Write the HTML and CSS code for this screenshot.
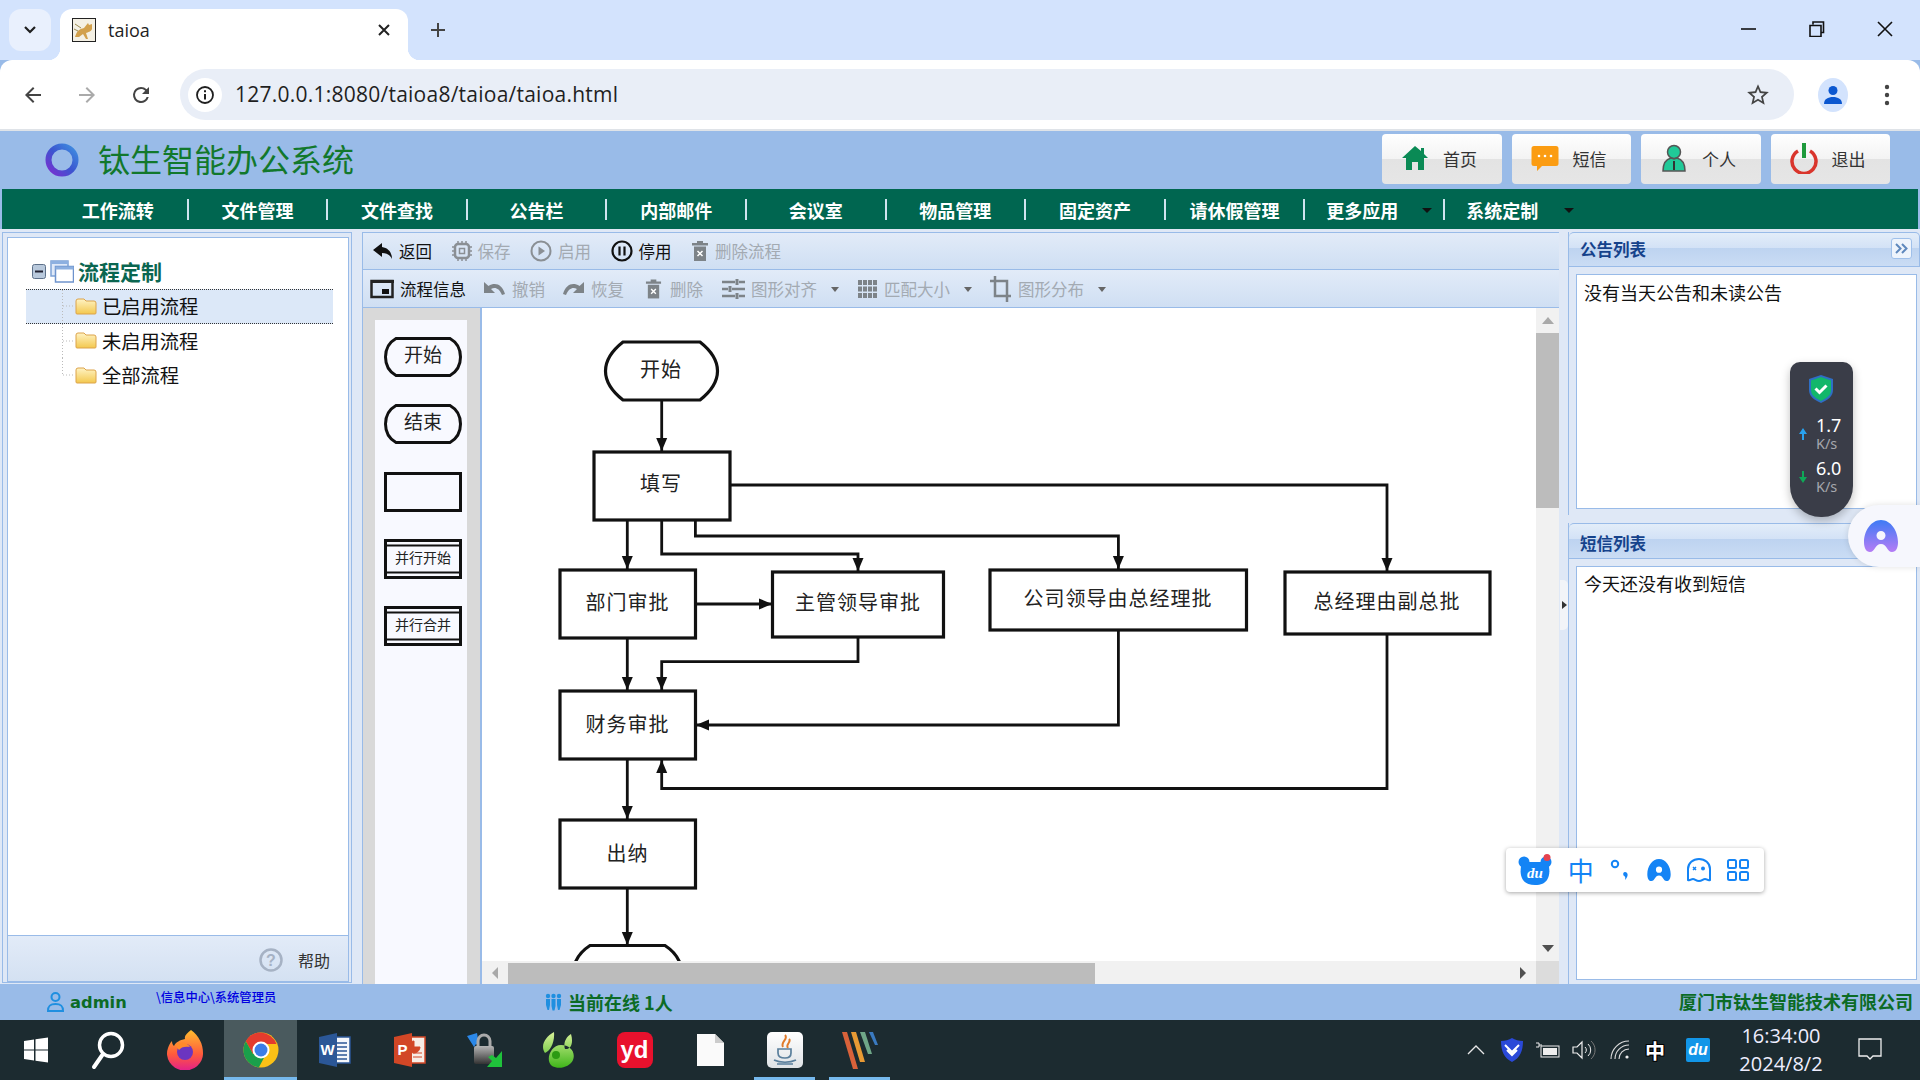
FILE: index.html
```html
<!DOCTYPE html>
<html lang="zh">
<head>
<meta charset="utf-8">
<title>taioa</title>
<link rel="stylesheet" href="styles.css">
</head>
<body>
<svg class="defs" width="0" height="0">
  <defs>
    <marker id="ah" markerUnits="userSpaceOnUse" markerWidth="14" markerHeight="12" refX="13" refY="6" orient="auto"><path d="M0 0.5 L13 6 L0 11.5Z" fill="#111"/></marker>
    <linearGradient id="ring" x1="1" y1="0" x2="0" y2="1"><stop offset="0" stop-color="#3f8fe0"/><stop offset=".5" stop-color="#3b55d0"/><stop offset="1" stop-color="#7a2fd0"/></linearGradient>
    <linearGradient id="folder" x1="0" y1="0" x2="0" y2="1"><stop offset="0" stop-color="#fff3c4"/><stop offset="1" stop-color="#f3c84e"/></linearGradient>
    <linearGradient id="ablue" x1="0" y1="0" x2="0" y2="1"><stop offset="0" stop-color="#3d7bf5"/><stop offset="1" stop-color="#b57cf5"/></linearGradient>
    <linearGradient id="fox" x1="0" y1="0" x2="0" y2="1"><stop offset="0" stop-color="#ffbd2e"/><stop offset=".6" stop-color="#ff5a3c"/><stop offset="1" stop-color="#e3208a"/></linearGradient>
    <linearGradient id="lockg" x1="0" y1="0" x2="0" y2="1"><stop offset="0" stop-color="#b5b5b5"/><stop offset="1" stop-color="#333"/></linearGradient>
    <linearGradient id="leaf" x1="0" y1="0" x2="0" y2="1"><stop offset="0" stop-color="#d9f29a"/><stop offset="1" stop-color="#3fb51a"/></linearGradient>
  </defs>
</svg>

<header class="tabstrip">
  <div class="tablist-btn"><svg width="14" height="10" viewBox="0 0 14 10"><path d="M2 2l5 5 5-5" fill="none" stroke="#1f1f1f" stroke-width="2.2"/></svg></div>
  <div class="tab">
    <svg class="favicon" width="24" height="24" viewBox="0 0 24 24"><rect x=".5" y=".5" width="23" height="23" fill="#f4f0e4" stroke="#222"/><path d="M3 19c2-7 5-8 9-9l4-5 1 2 3-1 0 5c-1 3-4 3-6 4l2 6h-2l-3-5-4 3H3z" fill="#d2a04c"/><path d="M3 6l6 4M2 11l4 2" stroke="#9a8a50" stroke-width="1"/></svg>
    <span class="tab-title">taioa</span>
    <svg class="tab-close" width="14" height="14" viewBox="0 0 14 14"><path d="M2 2l10 10M12 2L2 12" stroke="#222" stroke-width="2"/></svg>
  </div>
  <svg class="new-tab" width="18" height="18" viewBox="0 0 18 18"><path d="M9 2v14M2 9h14" stroke="#444" stroke-width="2"/></svg>
  <div class="win-ctrls">
    <svg width="16" height="16" viewBox="0 0 16 16"><path d="M0 8h15" stroke="#111" stroke-width="1.6"/></svg>
    <svg width="16" height="16" viewBox="0 0 16 16"><path d="M4 3.500V1h10.500v10.500H12M1 4.500h11v11H1z" fill="none" stroke="#111" stroke-width="1.6"/></svg>
    <svg width="16" height="16" viewBox="0 0 16 16"><path d="M1 1l14 14M15 1L1 15" stroke="#111" stroke-width="1.6"/></svg>
  </div>
</header>

<nav class="browserbar">
  <svg class="nav-ic" width="24" height="24" viewBox="0 0 24 24"><path d="M20 11H7.800l5.600-5.600L12 4l-8 8 8 8 1.400-1.400L7.800 13H20z" fill="#444"/></svg>
  <svg class="nav-ic" width="24" height="24" viewBox="0 0 24 24"><path d="M4 11h12.200l-5.600-5.600L12 4l8 8-8 8-1.400-1.400 5.600-5.600H4z" fill="#aaa"/></svg>
  <svg class="nav-ic" width="24" height="24" viewBox="0 0 24 24"><path d="M17.650 6.350A7.950 7.950 0 0 0 12 4a8 8 0 1 0 7.730 10h-2.080A6 6 0 1 1 12 6c1.660 0 3.140.69 4.220 1.780L13 11h7V4z" fill="#444"/></svg>
  <div class="omnibox">
    <div class="site-info"><svg width="20" height="20" viewBox="0 0 20 20"><circle cx="10" cy="10" r="8" fill="none" stroke="#1f1f1f" stroke-width="1.800"/><path d="M10 9v5.500M10 5.300v2" stroke="#1f1f1f" stroke-width="2"/></svg></div>
    <span class="url">127.0.0.1:8080/taioa8/taioa/taioa.html</span>
    <svg class="star" width="26" height="26" viewBox="0 0 24 24"><path d="M22 9.240l-7.190-.62L12 2 9.190 8.630 2 9.240l5.460 4.730L5.820 21 12 17.270 18.180 21l-1.630-7.030L22 9.240zM12 15.400l-3.760 2.270 1-4.280-3.320-2.880 4.380-.38L12 6.100l1.710 4.040 4.380.38-3.320 2.880 1 4.280L12 15.400z" fill="#444"/></svg>
  </div>
  <div class="profile"><svg width="20" height="20" viewBox="0 0 20 20"><circle cx="10" cy="5.500" r="4.500" fill="#0b57d0"/><path d="M1 19c0-5 4-7 9-7s9 2 9 7z" fill="#0b57d0"/></svg></div>
  <svg class="kebab" width="6" height="24" viewBox="0 0 6 24"><circle cx="3" cy="4" r="2.200" fill="#444"/><circle cx="3" cy="12" r="2.200" fill="#444"/><circle cx="3" cy="20" r="2.200" fill="#444"/></svg>
</nav>

<div class="app">
  <div class="app-head">
    <div class="brand">
      <svg class="ring" width="36" height="36" viewBox="0 0 36 36"><circle cx="18" cy="18" r="13.500" fill="none" stroke="url(#ring)" stroke-width="6"/></svg>
      <h1>钛生智能办公系统</h1>
    </div>
    <div class="top-btns">
      <a class="top-btn"><svg width="28" height="28" viewBox="0 0 28 28"><path d="M14 2L1 14h4v12h6v-8h6v8h6V14h4l-4-4V4h-3v3z" fill="#0a8a55"/></svg>首页</a>
      <a class="top-btn"><svg width="28" height="28" viewBox="0 0 28 28"><path d="M3 2h22a2.500 2.500 0 0 1 2.500 2.500v15A2.500 2.500 0 0 1 25 22H11l-5 5v-5H3a2.500 2.500 0 0 1-2.500-2.500v-15A2.500 2.500 0 0 1 3 2z" fill="#fb9c12"/><circle cx="8" cy="12" r="1.300" fill="#fff"/><circle cx="14" cy="12" r="1.300" fill="#fff"/><circle cx="20" cy="12" r="1.300" fill="#fff"/></svg>短信</a>
      <a class="top-btn"><svg width="28" height="28" viewBox="0 0 28 28"><circle cx="14" cy="8" r="6.500" fill="#20c998" stroke="#555" stroke-width="1.500"/><path d="M3 27c0-9 4-12 8-13l3 1 3-1c4 1 8 4 8 13z" fill="#20c998" stroke="#555" stroke-width="1.500"/><path d="M14 17v9" stroke="#333" stroke-width="2"/></svg>个人</a>
      <a class="top-btn"><svg width="28" height="32" viewBox="0 0 28 32"><path d="M8 9a12 12 0 1 0 12 0" fill="none" stroke="#d9352c" stroke-width="3.500"/><path d="M14 1v15" stroke="#1f9a3c" stroke-width="4"/></svg>退出</a>
    </div>
  </div>

  <div class="menubar">
    <a class="menu">工作流转</a><a class="menu">文件管理</a><a class="menu">文件查找</a><a class="menu">公告栏</a><a class="menu">内部邮件</a><a class="menu">会议室</a><a class="menu">物品管理</a><a class="menu">固定资产</a><a class="menu">请休假管理</a><a class="menu has-caret">更多应用<i class="caret"></i></a><a class="menu has-caret last">系统定制<i class="caret"></i></a>
  </div>

  <main class="workspace">
    <aside class="left-panel">
      <div class="tree">
        <div class="tree-root">
          <svg width="14" height="15" viewBox="0 0 14 15"><rect x=".5" y=".5" width="13" height="14" rx="2" fill="#b9c9dc" stroke="#5d7089"/><path d="M3 7.500h8" stroke="#223" stroke-width="2"/></svg>
          <svg width="24" height="23" viewBox="0 0 24 23"><rect x="1" y="1" width="17" height="15" fill="#dfe9f8" stroke="#7ea2d6" stroke-width="1.500"/><path d="M1 1h17v3H1z" fill="#8db0e0"/><rect x="5.500" y="6.500" width="18" height="15.500" fill="#fff" stroke="#6e93cc" stroke-width="1.500"/><path d="M5.500 6.500h18v3h-18z" fill="#8db0e0"/></svg>
          <strong>流程定制</strong>
        </div>
        <div class="tree-row selected">
          <svg class="conn" width="13" height="33" viewBox="0 0 13 33"><path d="M.5 0v33M1 16h12" stroke="#bbb" stroke-dasharray="1 2"/></svg>
          <svg width="22" height="17" viewBox="0 0 22 17"><path d="M1 3a2 2 0 0 1 2-2h6l2 2h8a2 2 0 0 1 2 2v10a1 1 0 0 1-1 1H2a1 1 0 0 1-1-1z" fill="url(#folder)" stroke="#dca34a"/></svg>
          <span>已启用流程</span>
        </div>
        <div class="tree-row">
          <svg class="conn" width="13" height="34" viewBox="0 0 13 34"><path d="M.5 0v34M1 17h12" stroke="#bbb" stroke-dasharray="1 2"/></svg>
          <svg width="22" height="17" viewBox="0 0 22 17"><path d="M1 3a2 2 0 0 1 2-2h6l2 2h8a2 2 0 0 1 2 2v10a1 1 0 0 1-1 1H2a1 1 0 0 1-1-1z" fill="url(#folder)" stroke="#dca34a"/></svg>
          <span>未启用流程</span>
        </div>
        <div class="tree-row">
          <svg class="conn" width="13" height="34" viewBox="0 0 13 34"><path d="M.5 0v17M1 17h12" stroke="#bbb" stroke-dasharray="1 2"/></svg>
          <svg width="22" height="17" viewBox="0 0 22 17"><path d="M1 3a2 2 0 0 1 2-2h6l2 2h8a2 2 0 0 1 2 2v10a1 1 0 0 1-1 1H2a1 1 0 0 1-1-1z" fill="url(#folder)" stroke="#dca34a"/></svg>
          <span>全部流程</span>
        </div>
      </div>
      <div class="left-foot">
        <svg width="24" height="24" viewBox="0 0 24 24"><circle cx="12" cy="12" r="10.500" fill="none" stroke="#a6b2c4" stroke-width="2.500"/><text x="12" y="18" class="help-q">?</text></svg>
        <span>帮助</span>
      </div>
    </aside>

    <div class="splitter"></div>

    <section class="center">
      <div class="toolbar row-one">
        <span class="tool"><svg width="20" height="18" viewBox="0 0 20 18"><path d="M9 1L0 8l9 7v-4c5 0 8 2 10 6 0-7-4-11-10-12z" fill="#111"/></svg>返回</span>
        <span class="tool off"><svg width="20" height="20" viewBox="0 0 20 20"><rect x="3" y="3" width="14" height="14" rx="3" fill="none" stroke="#8a8f94" stroke-width="2.500"/><rect x="7.500" y="7.500" width="5" height="5" fill="none" stroke="#8a8f94" stroke-width="1.500"/><path d="M6 0v3M10 0v3M14 0v3M6 17v3M10 17v3M14 17v3M0 6h3M0 10h3M0 14h3M17 6h3M17 10h3M17 14h3" stroke="#8a8f94" stroke-width="1.500"/></svg>保存</span>
        <span class="tool off"><svg width="22" height="22" viewBox="0 0 22 22"><circle cx="11" cy="11" r="9.500" fill="none" stroke="#8a8f94" stroke-width="2"/><path d="M8.500 6.500l6.500 4.500-6.500 4.500z" fill="#8a8f94"/></svg>启用</span>
        <span class="tool"><svg width="22" height="22" viewBox="0 0 22 22"><circle cx="11" cy="11" r="9.500" fill="none" stroke="#111" stroke-width="2.200"/><path d="M8.500 6.500v9M13.500 6.500v9" stroke="#111" stroke-width="2.200"/></svg>停用</span>
        <span class="tool off"><svg width="18" height="22" viewBox="0 0 18 22"><path d="M1 3h16v2.500H1zM6 1h6v2H6z" fill="#7d8388"/><path d="M3 6.500h12V21H3z" fill="#7d8388"/><path d="M6.500 11l5 5M11.500 11l-5 5" stroke="#fff" stroke-width="1.500"/></svg>删除流程</span>
      </div>
      <div class="toolbar row-two">
        <span class="tool first2"><svg width="24" height="24" viewBox="0 0 24 24"><path d="M1.500 4h21v16h-21z" fill="none" stroke="#222" stroke-width="2.500"/><path d="M1 3h23v3H1z" fill="#222"/><rect x="12" y="12" width="7" height="5" fill="#111"/></svg>流程信息</span>
        <span class="tool off"><svg width="23" height="16" viewBox="0 0 23 16"><path d="M1 1v11h11L8 8c4-2 8-1 11 6l3-1C19 3 12 1 5.500 5z" fill="#7d8388"/></svg>撤销</span>
        <span class="tool off"><svg width="23" height="16" viewBox="0 0 23 16"><path d="M22 1v11H11l4-4c-4-2-8-1-11 6l-3-1C4 3 11 1 17.500 5z" fill="#7d8388"/></svg>恢复</span>
        <span class="tool off trash"><svg width="17" height="22" viewBox="0 0 18 22"><path d="M1 3h16v2.500H1zM6 1h6v2H6z" fill="#7d8388"/><path d="M3 6.500h12V21H3z" fill="#7d8388"/><path d="M6.500 11l5 5M11.500 11l-5 5" stroke="#fff" stroke-width="1.500"/></svg>删除</span>
        <span class="tool off"><svg width="23" height="22" viewBox="0 0 23 22"><path d="M0 4h13M17 4h6M0 11h6M10 11h13M0 18h13M17 18h6" stroke="#7d8388" stroke-width="2.500"/><path d="M15 1v6M8 8v6M15 15v6" stroke="#7d8388" stroke-width="3"/></svg>图形对齐<i class="t-caret"></i></span>
        <span class="tool off"><svg width="21" height="20" viewBox="0 0 21 20"><path d="M1 1h4v5H1zM6 1h4v5H6zM11 1h4v5h-4zM16 1h4v5h-4zM1 7.500h4v5H1zM6 7.500h4v5H6zM11 7.500h4v5h-4zM16 7.500h4v5h-4zM1 14h4v5H1zM6 14h4v5H6zM11 14h4v5h-4zM16 14h4v5h-4z" fill="#7d8388"/></svg>匹配大小<i class="t-caret"></i></span>
        <span class="tool off"><svg width="22" height="26" viewBox="0 0 22 26"><path d="M5 0v20h16M0 5h17v21" fill="none" stroke="#7d8388" stroke-width="2.500"/></svg>图形分布<i class="t-caret"></i></span>
      </div>
      <div class="designer">
        <div class="palette">
          <div class="palette-inner">
            <svg class="pal-shape" width="78" height="40" viewBox="0 0 78 40"><path d="M12 1.500H66C74 6 76.500 12 76.500 20S74 34 66 38.500H12C4 34 1.500 28 1.500 20S4 6 12 1.500z" fill="none" stroke="#111" stroke-width="3"/><text x="39" y="25" class="pal-t">开始</text></svg>
            <svg class="pal-shape" width="78" height="40" viewBox="0 0 78 40"><path d="M12 1.500H66C74 6 76.500 12 76.500 20S74 34 66 38.500H12C4 34 1.500 28 1.500 20S4 6 12 1.500z" fill="none" stroke="#111" stroke-width="3"/><text x="39" y="25" class="pal-t">结束</text></svg>
            <svg class="pal-shape" width="78" height="40" viewBox="0 0 78 40"><rect x="1.500" y="1.500" width="75" height="37" fill="none" stroke="#111" stroke-width="3"/></svg>
            <svg class="pal-shape" width="78" height="40" viewBox="0 0 78 40"><rect x="1.500" y="1.500" width="75" height="37" fill="none" stroke="#111" stroke-width="3"/><path d="M1 6.500h76M1 33.500h76" stroke="#111" stroke-width="2"/><text x="39" y="24" class="pal-s">并行开始</text></svg>
            <svg class="pal-shape" width="78" height="40" viewBox="0 0 78 40"><rect x="1.500" y="1.500" width="75" height="37" fill="none" stroke="#111" stroke-width="3"/><path d="M1 6.500h76M1 33.500h76" stroke="#111" stroke-width="2"/><text x="39" y="24" class="pal-s">并行合并</text></svg>
          </div>
        </div>
        <div class="canvas-wrap">
          <svg class="flow" width="1054" height="653" viewBox="482 308 1054 653">
            <g class="nodes">
              <path d="M623 342H700C714 353 717.500 362 717.500 371S714 389 700 400H623C609 389 605.500 380 605.500 371S609 353 623 342z"/>
              <rect x="594" y="452" width="136" height="68"/>
              <rect x="560" y="570" width="135.500" height="68"/>
              <rect x="772.500" y="572" width="171" height="65"/>
              <rect x="990" y="570" width="256.500" height="60"/>
              <rect x="1285" y="572" width="205" height="62"/>
              <rect x="560" y="691" width="135.500" height="68"/>
              <rect x="560" y="820" width="135.500" height="68"/>
              <path d="M590 945.500H665C675 952 682 962 682 975H573C573 962 580 952 590 945.500z"/>
            </g>
            <g class="edges">
              <path d="M661.700 400V451"/>
              <path d="M627.300 520V569"/>
              <path d="M661.700 520V554H858V571"/>
              <path d="M695.400 520V536H1118.400V569"/>
              <path d="M730 485H1387V571"/>
              <path d="M695.500 604H772"/>
              <path d="M627.300 638V690"/>
              <path d="M858 637V661.700H661.700V690"/>
              <path d="M1118.400 630V725H696"/>
              <path d="M1387 634V788.500H661.700V760"/>
              <path d="M627.300 759V819"/>
              <path d="M627.300 888V945"/>
            </g>
            <g class="labels">
              <text x="661" y="377">开始</text>
              <text x="661" y="491">填写</text>
              <text x="627.500" y="610">部门审批</text>
              <text x="858" y="610">主管领导审批</text>
              <text x="1118" y="606">公司领导由总经理批</text>
              <text x="1387" y="609">总经理由副总批</text>
              <text x="627.500" y="732">财务审批</text>
              <text x="627.500" y="861">出纳</text>
            </g>
          </svg>
          <div class="vscroll">
            <span class="sb-btn"><i class="tri up"></i></span>
            <span class="vthumb"></span>
            <span class="sb-fill"></span>
            <span class="sb-btn"><i class="tri down"></i></span>
          </div>
          <div class="hscroll">
            <span class="sb-btn h"><i class="tri left"></i></span>
            <span class="hthumb"></span>
            <span class="sb-fill"></span>
            <span class="sb-btn h"><i class="tri right"></i></span>
          </div>
          <div class="sb-corner"></div>
        </div>
      </div>
    </section>

    <div class="splitter right"><span class="handle"><i class="tri-sm"></i></span></div>

    <aside class="right-panel">
      <section class="side-card first">
        <div class="side-head"><b>公告列表</b><span class="collapse"><svg width="13" height="11" viewBox="0 0 13 11"><path d="M1 1l4.500 4.500L1 10M7 1l4.500 4.500L7 10" fill="none" stroke="#5e88bd" stroke-width="2"/></svg></span></div>
        <div class="side-body"><div class="side-box">没有当天公告和未读公告</div></div>
      </section>
      <section class="side-card second">
        <div class="side-head"><b>短信列表</b></div>
        <div class="side-body"><div class="side-box">今天还没有收到短信</div></div>
      </section>
    </aside>
  </main>

  <footer class="statusbar">
    <svg class="st-user" width="17" height="20" viewBox="0 0 17 20"><circle cx="8.500" cy="5" r="4" fill="none" stroke="#1f8fe0" stroke-width="2"/><path d="M1 19c0-5 2-7 7.500-7s7.500 2 7.500 7z" fill="none" stroke="#1f8fe0" stroke-width="2"/></svg>
    <b class="st-name">admin</b>
    <span class="st-path">\信息中心\系统管理员</span>
    <svg class="st-online" width="17" height="18" viewBox="0 0 17 18"><g fill="#1f8fe0"><circle cx="3" cy="3" r="2.200"/><circle cx="8.500" cy="3" r="2.200"/><circle cx="14" cy="3" r="2.200"/><path d="M1 6h4v6l-1 5H2.500L1 12zM6.500 6h4v7l-1 4.500h-2L6.500 13zM12 6h4v6l-1.500 5H13l-1-5z"/></g></svg>
    <b class="st-count">当前在线 1人</b>
    <b class="st-company">厦门市钛生智能技术有限公司</b>
  </footer>
</div>

<div class="taskbar">
  <span class="task narrow"><svg width="26" height="26" viewBox="0 0 26 26"><path d="M1 4l10-1.500v10H1zM12.500 2.300L25 .5v12H12.500zM1 13.500h10v10L1 22zM12.500 13.500H25v12l-12.500-1.800z" fill="#fff"/></svg></span>
  <span class="task narrow gapr"><svg width="34" height="40" viewBox="0 0 34 40"><circle cx="20" cy="15" r="11.500" fill="none" stroke="#fff" stroke-width="3.500"/><path d="M12 24L3 37" stroke="#fff" stroke-width="4" stroke-linecap="round"/></svg></span>
  <span class="task"><svg width="36" height="40" viewBox="0 0 36 40"><path d="M24 0c8 6 12 14 12 23a18 17 0 1 1-35-5c1-3 2-5 4-7 0 3 1 4 2 5 2-4 6-6 11-7-1-3 2-6 6-9z" fill="url(#fox)"/><circle cx="18" cy="22" r="8" fill="#6b35c0"/><path d="M8 15c5-4 12-3 15 2-5-1-9 0-11 3z" fill="#ff8a2a"/></svg></span>
  <span class="task active"><svg width="36" height="36" viewBox="0 0 36 36"><circle cx="18" cy="18" r="17.500" fill="#fbc116"/><path d="M18 .500A17.500 17.500 0 0 0 2.800 9.200L10 22l8-10h15.500A17.500 17.500 0 0 0 18 .500z" fill="#e33b2e"/><path d="M2.800 9.200A17.500 17.500 0 0 0 15.800 35.400L23 22l-13 0z" fill="#1a9f4b"/><circle cx="18" cy="18" r="8.500" fill="#fff"/><circle cx="18" cy="18" r="6.500" fill="#3b7de8"/></svg></span>
  <span class="task"><svg width="32" height="34" viewBox="0 0 32 34"><rect x="12" y="4" width="19" height="26" fill="#f4f7fb" stroke="#2b5797" stroke-width="1.500"/><path d="M18 10h10M18 14h10M18 18h10M18 22h10M18 26h10" stroke="#2b5797" stroke-width="1.500"/><path d="M0 4l18-4v34L0 30z" fill="#2b5797"/><text x="8.500" y="22" class="app-letter">W</text></svg></span>
  <span class="task"><svg width="32" height="34" viewBox="0 0 32 34"><rect x="12" y="4" width="19" height="26" fill="#f7ede6" stroke="#d24726" stroke-width="1.500"/><path d="M20 8a6 6 0 1 0 6 6h-6zM19 20h9M19 24h9" fill="#d24726" stroke="#d24726"/><path d="M0 4l18-4v34L0 30z" fill="#d24726"/><text x="8.500" y="22" class="app-letter">P</text></svg></span>
  <span class="task"><svg width="36" height="38" viewBox="0 0 36 38"><path d="M10 2L0 5l7 11 2-3 3 1z" fill="#2b88e8"/><path d="M11 15v-5a6 6 0 0 1 12 0v5" fill="none" stroke="#aaa" stroke-width="3"/><rect x="7" y="15" width="20" height="18" rx="2" fill="url(#lockg)"/><path d="M35 20v16H20l5-6-4-4 4-2 4 3z" fill="#1fc23b"/></svg></span>
  <span class="task"><svg width="36" height="38" viewBox="0 0 36 38"><path d="M12 1C3 6-2 15 3 22c5-2 10-10 9-21zM29 3c-5 3-8 9-6 15 5 1 9-5 6-15zM19 14c9 0 15 7 12 15-3 7-14 10-21 6C3 30 8 14 19 14z" fill="url(#leaf)"/><circle cx="14" cy="24" r="4" fill="#2c9a13"/></svg></span>
  <span class="task"><span class="yd">yd</span></span>
  <span class="task"><svg width="28" height="32" viewBox="0 0 28 32"><path d="M1 0h18l9 9v23H1z" fill="#fafafa"/><path d="M19 0v9h9z" fill="#ccc"/></svg></span>
  <span class="task running"><span class="java"><svg width="26" height="32" viewBox="0 0 26 32"><path d="M13 1c4 4-5 7-2 12M17 5c3 3-4 5-1 9" fill="none" stroke="#e07a2a" stroke-width="2"/><path d="M6 15h13v4c0 4-2 5-6 5s-7-1-7-5zM2 26c6 3 16 3 22 0M5 30h16" fill="none" stroke="#5a7f9c" stroke-width="1.700"/></svg></span></span>
  <span class="task running"><svg width="36" height="38" viewBox="0 0 36 38"><path d="M0 1h5l11 37h-5z" fill="#d9623a"/><path d="M9 1h5l9 30h-5z" fill="#e89a34"/><path d="M18 1h5l7 22h-4z" fill="#6fa788"/><path d="M27 1h4l5 13h-3z" fill="#3a7ac0"/></svg></span>
  <div class="tray">
    <span class="tray-i"><svg width="18" height="10" viewBox="0 0 18 10"><path d="M1 9l8-8 8 8" fill="none" stroke="#e8e8e8" stroke-width="1.300"/></svg></span>
    <span class="tray-i"><svg width="24" height="26" viewBox="0 0 24 26"><path d="M12 1c3 2 7 3 11 3 0 10-3 17-11 21C4 21 1 14 1 4c4 0 8-1 11-3z" fill="#2a49d8"/><path d="M5 8l7 7 7-7M7 13l5 5 5-5" fill="none" stroke="#fff" stroke-width="2"/></svg></span>
    <span class="tray-i"><svg width="24" height="18" viewBox="0 0 24 18"><path d="M0 2h3v2h3M0 6h3V4" stroke="#eee" fill="none"/><rect x="5" y="5" width="18" height="11" fill="none" stroke="#eee"/><rect x="7" y="7" width="14" height="7" fill="#eee"/></svg></span>
    <span class="tray-i"><svg width="24" height="20" viewBox="0 0 24 20"><path d="M1 7h4l5-5v16l-5-5H1z" fill="none" stroke="#eee" stroke-width="1.200"/><path d="M13 7a4 4 0 0 1 0 6M16 4a8 8 0 0 1 0 12" fill="none" stroke="#eee"/><path d="M19 1a12 12 0 0 1 0 18" fill="none" stroke="#777"/></svg></span>
    <span class="tray-i"><svg width="20" height="20" viewBox="0 0 20 20"><path d="M1 19A18 18 0 0 1 19 1M5 19A14 14 0 0 1 19 5M9 19A10 10 0 0 1 19 9" fill="none" stroke="#ddd" stroke-width="1.100"/><circle cx="17" cy="17" r="1.600" fill="#eee"/></svg></span>
    <span class="tray-i ime">中</span>
    <span class="tray-i wide"><span class="du-tile">du</span></span>
    <span class="clock"><span>16:34:00</span><span>2024/8/2</span></span>
    <span class="tray-i notify"><svg width="24" height="24" viewBox="0 0 24 24"><path d="M1 1h22v17h-8l-3 3-3-3H1z" fill="none" stroke="#eee" stroke-width="1.300"/></svg></span>
  </div>
</div>

<div class="speed-pill">
  <svg width="24" height="28" viewBox="0 0 24 28"><path d="M12 0l12 4v11c0 6-5 10-12 13C5 25 0 21 0 15V4z" fill="#2f6ec4"/><path d="M12 2l10 3.500V15c0 5-4 8-10 11C6 23 2 20 2 15V5.500z" fill="#12b76a"/><path d="M6.500 13.500l4 4 7-7" fill="none" stroke="#fff" stroke-width="3"/></svg>
  <div class="speed first"><svg width="8" height="12" viewBox="0 0 8 12"><path d="M4 0l4 6H5v6H3V6H0z" fill="#29a3f0"/></svg><span class="rate">1.7<small>K/s</small></span></div>
  <div class="speed"><svg width="8" height="12" viewBox="0 0 8 12"><path d="M4 12L0 6h3V0h2v6h3z" fill="#0fa958"/></svg><span class="rate">6.0<small>K/s</small></span></div>
</div>

<div class="assist-blob"><svg width="34" height="32" viewBox="0 0 34 32"><path fill-rule="evenodd" d="M17 0c10 0 17 11 17 22 0 6-2 10-6 10-5 0-5-8-11-8S11 32 6 32c-4 0-6-4-6-10C0 11 7 0 17 0zm0 11a4.500 4.500 0 1 0 0 9 4.500 4.500 0 0 0 0-9z" fill="url(#ablue)"/></svg></div>

<div class="ime-bar">
  <span class="ime-i bear"><svg width="34" height="32" viewBox="0 0 34 32"><circle cx="6" cy="8" r="5.500" fill="#1484f5"/><circle cx="28" cy="8" r="5.500" fill="#1484f5"/><path d="M4 8h26c2 8 2 13-1 18-2 3-6 5-12 5s-10-2-12-5C2 21 2 16 4 8z" fill="#1484f5"/><text x="17" y="24" class="du-t">du</text><circle cx="29" cy="3.500" r="3.500" fill="#e5434f"/></svg></span>
  <span class="ime-i zh">中</span>
  <span class="ime-i"><svg width="20" height="22" viewBox="0 0 20 22"><circle cx="5" cy="5" r="3.200" fill="none" stroke="#1484f5" stroke-width="2"/><path d="M15 13c3 0 4 4 0 8 .8-3 0-3.500-1.500-4.500-.8-2 0-3.500 1.500-3.500z" fill="#1484f5"/></svg></span>
  <span class="ime-i"><svg width="24" height="22" viewBox="0 0 34 32"><path fill-rule="evenodd" d="M17 0c10 0 17 11 17 22 0 6-2 10-6 10-5 0-5-8-11-8S11 32 6 32c-4 0-6-4-6-10C0 11 7 0 17 0zm0 11a4.500 4.500 0 1 0 0 9 4.500 4.500 0 0 0 0-9z" fill="#1484f5"/></svg></span>
  <span class="ime-i"><svg width="24" height="24" viewBox="0 0 24 24"><path d="M1 22V11C1 5 6 1 12 1s11 4 11 10v11c-2 1-3-1-5-1s-3 2-6 2-4-2-6-2-3 2-5 1z" fill="none" stroke="#1484f5" stroke-width="2"/><path d="M6 9l3 3M9 9l-3 3" stroke="#1484f5" stroke-width="1.500"/><circle cx="16" cy="10.500" r="2" fill="#1484f5"/></svg></span>
  <span class="ime-i"><svg width="22" height="22" viewBox="0 0 22 22"><g fill="none" stroke="#1484f5" stroke-width="2"><rect x="1" y="1" width="8" height="8" rx="1.500"/><rect x="13" y="1" width="8" height="8" rx="1.500"/><rect x="1" y="13" width="8" height="8" rx="1.500"/><rect x="13" y="13" width="8" height="8" rx="1.500"/></g></svg></span>
</div>
</body>
</html>
```
FILE: styles.css
```css
* { box-sizing: border-box; }
html, body { margin: 0; padding: 0; }
body {
  width: 1920px; height: 1080px; overflow: hidden; position: relative;
  display: flex; flex-direction: column;
  font-family: "Noto Sans CJK SC", "Noto Sans", sans-serif;
  background: #99bbe8;
}
.defs { position: absolute; }
svg { display: block; flex: none; }
i { display: block; }

/* browser chrome */
.tabstrip { height: 60px; flex: none; background: #d3e3fd; display: flex; align-items: flex-start; padding: 9px 0 0 9px; }
.tablist-btn { width: 42px; height: 42px; border-radius: 12px; background: #e9f0fd; display: flex; align-items: center; justify-content: center; }
.tab { position: relative; width: 348px; height: 51px; margin-left: 9px; background: #fff; border-radius: 12px 12px 0 0; display: flex; align-items: center; padding: 0 17px 9px 12px; z-index: 1; }
.tab::before, .tab::after { content: ""; position: absolute; bottom: 0; width: 12px; height: 12px; }
.tab::before { left: -12px; background: radial-gradient(circle at 0 0, transparent 12px, #fff 12.500px); }
.tab::after { right: -12px; background: radial-gradient(circle at 100% 0, transparent 12px, #fff 12.500px); }
.tab-title { margin-left: 12px; font: 18px "Open Sans", sans-serif; color: #1f1f1f; }
.tab-close { margin-left: auto; }
.new-tab { margin: 12px 0 0 21px; }
.win-ctrls { margin-left: auto; display: flex; gap: 52px; padding: 12px 27px 0 0; }

.browserbar { height: 71px; flex: none; background: #fff; border-bottom: 2px solid #dfe3e8; border-radius: 12px 12px 0 0; display: flex; align-items: center; padding-left: 21px; }
.nav-ic { margin-right: 30px; }
.nav-ic:nth-child(3) { margin-right: 27px; }
.omnibox { width: 1614px; height: 51px; border-radius: 26px; background: #e9eef7; display: flex; align-items: center; padding-left: 8px; }
.site-info { width: 34px; height: 34px; border-radius: 50%; background: #fff; display: flex; align-items: center; justify-content: center; }
.url { margin-left: 13px; padding-bottom: 1px; font: 21px "Open Sans", sans-serif; letter-spacing: .24px; color: #1f1f1f; }
.star { margin-left: auto; margin-right: 23px; }
.profile { width: 30px; height: 34px; margin-left: 24px; border-radius: 50%; background: #d3e3fd; display: flex; align-items: center; justify-content: center; }
.kebab { margin-left: 36px; }

/* app */
.app { flex: none; height: 889px; display: flex; flex-direction: column; background: #99bbe8; }
.app-head { height: 58px; flex: none; display: flex; align-items: center; justify-content: space-between; padding: 0 30px 0 44px; }
.brand { display: flex; align-items: center; gap: 18px; }
.brand h1 { margin: -4px 0 0; font-size: 32px; font-weight: 400; color: #12782c; line-height: 1; }
.top-btns { display: flex; gap: 10px; padding-bottom: 2px; }
.top-btn { width: 119.500px; height: 50px; border-radius: 4px; display: flex; align-items: center; gap: 14px; padding: 0 0 2px 19px; font-size: 17px; color: #333; background: linear-gradient(#fff 0, #f3f3f3 50%, #e3e3e3 50%, #e6e6e6 100%); }

.menubar { height: 40px; flex: none; margin: 0 2px; padding-left: 47px; background: #006650; display: flex; align-items: center; }
.menu { width: 139.600px; height: 21px; display: flex; align-items: center; justify-content: center; padding-top: 2px; font-size: 18px; font-weight: 700; color: #fff; border-right: 2px solid #cfe3ee; position: relative; }
.menu.has-caret { padding-right: 24px; }
.menu.last { border-right: 0; padding-right: 25px; }
.caret { position: absolute; right: 11px; top: 9px; border: 5px solid transparent; border-top: 5px solid #111; border-bottom: 0; }

.workspace { height: 755px; flex: none; display: flex; background: #dfe8f6; }
.left-panel { width: 350px; flex: none; margin: 3px 0 1px 2px; border: 1px solid #99bbe8; padding: 4px 2px 0 4px; display: flex; flex-direction: column; }
.tree { flex: 1; background: #fff; border: 1px solid #99bbe8; padding: 19px 15px 0 18px; }
.tree-root { height: 29px; display: flex; align-items: center; padding: 0 0 1px 6px; }
.tree-root strong { margin: -1px 0 0 4px; font-size: 21px; color: #0a6650; }
.tree-root svg:nth-child(2) { margin-left: 4px; }
.tree-row { height: 34.500px; display: flex; align-items: center; padding-left: 36px; font-size: 19.300px; color: #111; }
.tree-row.selected { margin-top: 3px; background: #dce8f8; border-top: 1px dotted #333; border-bottom: 1px dotted #333; }
.tree-row span { margin-left: 5px; }
.left-foot { height: 46px; flex: none; border: 1px solid #99bbe8; border-top: 0; background: linear-gradient(#e2ebf8, #d4e1f2); display: flex; align-items: center; justify-content: flex-end; gap: 15px; padding: 2px 18px 0 0; font-size: 16px; color: #333; }
.help-q { font: 700 16px "Liberation Sans", sans-serif; fill: #a6b2c4; text-anchor: middle; }

.splitter { width: 10px; flex: none; }
.splitter.right { width: 9px; display: flex; align-items: center; padding-bottom: 3px; }
.handle { width: 8px; height: 50px; margin: 0 0 0 1px; background: #f2f4f8; border-radius: 0 5px 5px 0; display: flex; align-items: center; justify-content: center; }
.tri-sm { border-left: 5px solid #333; border-top: 4px solid transparent; border-bottom: 4px solid transparent; }

.center { width: 1197px; flex: none; margin-top: 3px; border: 1px solid #99bbe8; border-bottom: 0; border-right: 0; display: flex; flex-direction: column; }
.toolbar { height: 38px; flex: none; display: flex; align-items: center; gap: 17px; padding-left: 10px; background: linear-gradient(#e2ebf8, #cfdff3); border-bottom: 1px solid #99bbe8; }
.toolbar.row-one { height: 37px; gap: 19.500px; }
.toolbar.row-two { padding-top: 1px; }
.tool { display: flex; align-items: center; gap: 6px; font-size: 16.500px; color: #111; line-height: 1; }
.tool.off { color: #a3aab2; }
.tool.first2 { margin-left: -3px; }
.tool.trash { margin-left: 4px; gap: 8px; margin-right: 2px; }
.t-caret { margin-left: 8px; margin-right: 1px; border: 4.500px solid transparent; border-top: 5px solid #666; border-bottom: 0; }
.designer { flex: 1; display: flex; min-height: 0; }
.palette { width: 119px; flex: none; background: #d9d9d9; border-right: 2px solid #99bbe8; padding: 12px 13px 0 12px; }
.palette-inner { height: 100%; background: #f8f9ff; padding: 17px 7px 0 9px; display: flex; flex-direction: column; gap: 27.300px; }
.pal-t { font-size: 19px; fill: #222; text-anchor: middle; }
.pal-s { font-size: 14px; fill: #222; text-anchor: middle; }

.canvas-wrap { flex: 1; display: grid; grid-template-columns: 1fr 23px; grid-template-rows: 1fr 23px; min-width: 0; background: #fff; }
.flow { width: 1054px; height: 653px; background: #fff; }
.nodes > * { fill: none; stroke: #111; stroke-width: 3.200px; }
.edges path { fill: none; stroke: #111; stroke-width: 2.800px; marker-end: url(#ah); }
.labels text { font-size: 20px; letter-spacing: 1px; fill: #222; text-anchor: middle; }
.vscroll { background: #f1f1f1; display: flex; flex-direction: column; }
.hscroll { background: #f1f1f1; display: flex; }
.sb-btn { height: 25px; flex: none; display: flex; align-items: center; justify-content: center; }
.sb-btn.h { width: 26px; height: 23px; }
.sb-fill { flex: 1; }
.vthumb { height: 175px; flex: none; background: #bcbcbc; }
.hthumb { width: 587px; flex: none; margin-top: 2px; background: #bcbcbc; }
.sb-corner { background: #dcdcdc; }
.tri.up { border-left: 6px solid transparent; border-right: 6px solid transparent; border-bottom: 7px solid #a9a9a9; }
.tri.down { border-left: 6px solid transparent; border-right: 6px solid transparent; border-top: 7px solid #505050; }
.tri.left { border-top: 6px solid transparent; border-bottom: 6px solid transparent; border-right: 6px solid #a9a9a9; }
.tri.right { border-top: 6px solid transparent; border-bottom: 6px solid transparent; border-left: 6px solid #505050; }

.right-panel { flex: 1; min-width: 0; margin-top: 3px; display: flex; flex-direction: column; }
.side-card { display: flex; flex-direction: column; border-left: 1px solid #99bbe8; }
.side-card.first { height: 283px; }
.side-card.second { flex: 1; margin-top: 8px; }
.side-head { height: 35px; flex: none; display: flex; align-items: center; justify-content: space-between; padding: 0 7px 2px 11px; background: linear-gradient(#e3edf9 0, #d3e2f6 44%, #bdd3f0 44%, #cadcf4 100%); border: 1px solid #99bbe8; border-width: 1px 1px 1px 0; border-radius: 5px 5px 0 0; font-size: 16.500px; color: #15428b; }
.second .side-head { height: 36px; padding-top: 3px; padding-bottom: 0; }
.collapse { width: 21px; height: 21px; background: #eef4fc; border: 1px solid #9fc0ea; border-radius: 3px; display: flex; align-items: center; justify-content: center; }
.side-body { flex: 1; padding: 7px 3px 6px 7px; display: flex; min-height: 0; }
.second .side-body { padding-bottom: 4px; }
.side-box { flex: 1; background: #fff; border: 1px solid #99bbe8; padding: 4px 7px; font-size: 18px; line-height: 26px; color: #111; }
.second .side-box { padding-top: 3px; }

.statusbar { height: 36px; flex: none; display: flex; align-items: center; padding-left: 47px; font-size: 17px; color: #0c6b25; }
.st-name { margin-left: 6px; width: 86px; font-family: "DejaVu Sans", sans-serif; font-size: 16.300px; }
.st-path { font-size: 12.300px; font-weight: 500; color: #0000e0; width: 389px; margin-top: -10px; }
.st-count { margin-left: 6px; font-size: 18px; }
.st-company { margin-left: auto; padding-right: 7px; font-size: 18px; margin-top: -3px; }

/* taskbar */
.taskbar { height: 60px; flex: none; background: #1c2b30; display: flex; color: #fff; }
.task { width: 75px; flex: none; display: flex; align-items: center; justify-content: center; }
.task.narrow { width: 72px; }
.task.gapr { margin-right: 3px; }
.task.active { width: 73px; margin-left: 2px; background: #4a5a5e linear-gradient(#76b9ed, #76b9ed) bottom / 100% 3px no-repeat; }
.task.running { background: linear-gradient(#76b9ed, #76b9ed) center bottom / 61px 3px no-repeat; }
.app-letter { font: 700 15px "Liberation Sans", sans-serif; fill: #fff; text-anchor: middle; }
.yd { width: 36px; height: 36px; border-radius: 8px; background: #e8112d; display: flex; align-items: center; justify-content: center; font: 700 24px/1 "Liberation Sans", sans-serif; color: #fff; }
.java { width: 36px; height: 36px; border-radius: 5px; background: linear-gradient(#fff, #dfe3e6); display: flex; align-items: center; justify-content: center; }
.tray { margin-left: auto; display: flex; align-items: center; padding-right: 18px; height: 100%; }
.tray-i { width: 36px; display: flex; justify-content: center; align-items: center; }
.tray-i.ime { width: 34px; font-size: 20px; font-weight: 700; color: #fff; text-shadow: 1px 1px 0 #000, -1px -1px 0 #000, 1px -1px 0 #000, -1px 1px 0 #000; }
.tray-i.wide { width: 52px; }
.du-tile { width: 24px; height: 24px; border-radius: 2px; background: #1296e8; font: italic 700 16px/24px "Liberation Sans", sans-serif; text-align: center; color: #fff; }
.clock { width: 114px; display: flex; flex-direction: column; align-items: center; font: 20px/28px "Open Sans", sans-serif; color: #eef; }
.tray-i.notify { width: 64px; }

/* floating widgets */
.speed-pill { position: absolute; left: 1790px; top: 362px; width: 63px; height: 155px; border-radius: 10px 10px 31px 31px; background: #3a3d48; box-shadow: 0 4px 10px rgba(0,0,0,.25); padding: 13px 0 0 7px; display: flex; flex-direction: column; }
.speed-pill > svg { margin: 0 0 0 12px; }
.speed { display: flex; align-items: center; gap: 9px; margin: 8px 0 0 2px; }
.speed.first { margin-top: 13px; }
.rate { display: flex; flex-direction: column; font: 18px/19px "Noto Sans", sans-serif; color: #fff; }
.rate small { font-size: 14.500px; line-height: 16px; color: #a5a7ad; }
.assist-blob { position: absolute; left: 1848px; top: 505px; width: 72px; height: 62px; border-radius: 31px 0 0 31px; background: #f6f7fd; box-shadow: 0 0 6px rgba(0,0,0,.12); display: flex; align-items: center; padding-left: 16px; }
.ime-bar { position: absolute; left: 1506px; top: 848px; width: 258px; height: 44px; border-radius: 4px; background: #fff; box-shadow: 0 1px 4px rgba(0,0,0,.35); display: flex; align-items: center; padding-left: 9px; }
.ime-i { width: 39.250px; display: flex; justify-content: center; align-items: center; }
.ime-i.bear { margin-right: 7px; }
.ime-i.zh { font-size: 26px; line-height: 1; color: #1484f5; }
.du-t { font: italic 700 15px "Liberation Serif", serif; fill: #fff; text-anchor: middle; }
```
